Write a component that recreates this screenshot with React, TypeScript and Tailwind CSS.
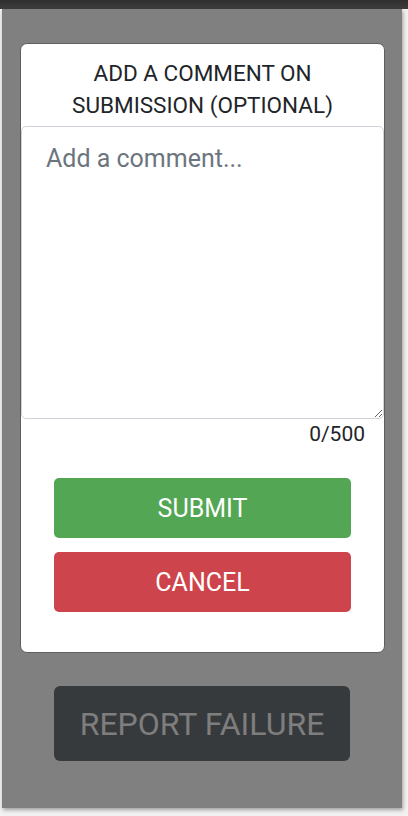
import React from "react";

export default function App() {
  return (
    <div
      className="w-[408px] h-[816px] bg-[#f2f2f2] overflow-hidden flex flex-col"
      style={{ fontFamily: "Roboto, 'Liberation Sans', sans-serif" }}
    >
      <div className="h-[9px] w-full bg-gradient-to-b from-[#2e2e2e] to-[#3d3d3d] shrink-0" />
      <div className="ml-[2px] w-[400px] h-[799px] bg-[#808080] shadow-[1px_2px_4px_rgba(0,0,0,0.35)] flex flex-col pt-[34px]">
        <div className="ml-[18px] w-[365px] bg-white border border-[#5e5e5e] rounded-[7px] flex flex-col pt-[13px] pb-[40px]">
          <div className="text-center text-[22.5px] leading-[32px] text-[#212529]">
            ADD A COMMENT ON
            <br />
            SUBMISSION (OPTIONAL)
          </div>
          <textarea
            className="mt-[5px] h-[293px] w-full border border-[#ced4da] rounded-[5px] px-[24px] pt-[13px] text-[25px] leading-[37px] text-[#495057] placeholder:text-[#6c757d] outline-none bg-white"
            placeholder="Add a comment..."
          />
          <div className="text-right pr-[19px] text-[21px] leading-[30px] text-[#212529]">0/500</div>
          <div className="mt-[29px] mx-[33px] flex flex-col gap-[14px]">
            <button className="h-[60px] w-full rounded-[5px] bg-[#53a653] text-white text-[25px] leading-none">
              SUBMIT
            </button>
            <button className="h-[60px] w-full rounded-[5px] bg-[#cd444c] text-white text-[25px] leading-none">
              CANCEL
            </button>
          </div>
        </div>
        <button className="mt-[33px] ml-[52px] w-[296px] h-[75px] rounded-[6px] bg-[#373a3d] text-[#7e7e7e] text-[32px] leading-none">
          REPORT FAILURE
        </button>
      </div>
    </div>
  );
}
